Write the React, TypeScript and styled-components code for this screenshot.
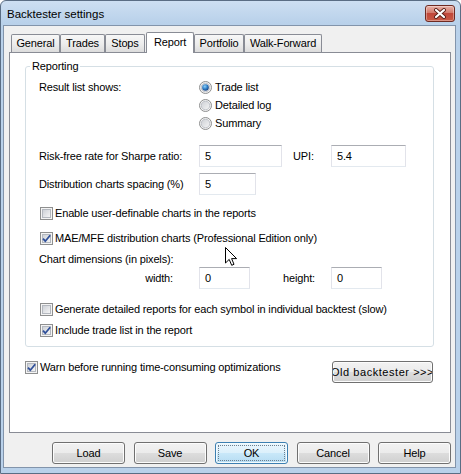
import React, { useId } from 'react';
import styled, { createGlobalStyle, css } from 'styled-components';

const GlobalStyle = createGlobalStyle`
  *, *::before, *::after { box-sizing: border-box; }
  html, body { margin: 0; padding: 0; background: #fff; }
  body {
    font-family: "Liberation Sans", Arial, sans-serif;
    font-size: 11px;
    letter-spacing: -0.15px;
    color: #000;
  }
`;

const Frame = styled.div`
  position: relative;
  width: 461px;
  height: 474px;
  display: flex;
  flex-direction: column;
  padding: 0 4px 5px 2px;
  border: 1px solid #5a6d84;
  border-radius: 6px 6px 0 0;
  background: linear-gradient(to bottom, #cddff2 0px, #b9d1ea 22px, #b9d1ea 100%);
  overflow: hidden;
`;

const TitleBar = styled.div`
  height: 24px;
  display: flex;
  justify-content: space-between;
  align-items: flex-start;
`;

const Title = styled.div`
  padding: 5px 0 0 4px;
  line-height: 16px;
  font-size: 11.5px;
  letter-spacing: 0;
`;

const CloseButton = styled.div`
  width: 30px;
  height: 17px;
  margin: 4px 1px 0 0;
  border: 1px solid #6e2a22;
  border-radius: 3px;
  display: flex;
  align-items: center;
  justify-content: center;
  background: linear-gradient(to bottom, #e8b2a8 0%, #d27a6c 45%, #c0473a 50%, #c85a45 100%);
  box-shadow: inset 0 0 0 1px rgba(255, 255, 255, 0.35);
`;

const Client = styled.div`
  flex: 1;
  display: flex;
  flex-direction: column;
  padding: 6px 4px 3px 5px;
  background: #f0f0f0;
  border: 1px solid #8294ab;
`;

const TabStrip = styled.div`
  height: 20px;
  display: flex;
  align-items: flex-end;
  padding-left: 2px;
`;

const Tab = styled.div<{ $width: number; $active?: boolean }>`
  width: ${(p) => p.$width}px;
  height: 18px;
  line-height: 17px;
  text-align: center;
  border: 1px solid #898c95;
  border-bottom: none;
  border-radius: 2px 2px 0 0;
  background: linear-gradient(to bottom, #f7f7f7 0%, #ececec 55%, #dcdcdc 100%);
  ${(p) =>
    p.$active &&
    css`
      position: relative;
      z-index: 1;
      height: 21px;
      line-height: 18px;
      padding-bottom: 2px;
      margin: 0 0 -1px 1px;
      background: #fff;
    `}
`;

const Panel = styled.div`
  height: 381px;
  display: flex;
  flex-direction: column;
  padding: 0 16px 0 15px;
  background: #fff;
  border: 1px solid #898c95;
`;

const Group = styled.fieldset`
  margin: 6px 0 0;
  padding: 0;
  min-width: 0;
  border: 1px solid #d5dfe5;
  border-radius: 3px;
`;

const Legend = styled.legend`
  margin-left: 4px;
  padding: 0 2px;
  line-height: 14px;
`;

const GroupBody = styled.div`
  display: flex;
  flex-direction: column;
  padding: 5px 0 8px 13px;
`;

const Row = styled.div<{ $gap?: number }>`
  display: flex;
  align-items: center;
  margin-top: ${(p) => p.$gap ?? 0}px;
`;

const TopRow = styled(Row)`
  align-items: flex-start;
`;

const FieldLabel = styled.div<{ $width?: number; $right?: number }>`
  width: ${(p) => p.$width ?? 160}px;
  flex-shrink: 0;
  line-height: 18px;
  ${(p) =>
    p.$right !== undefined &&
    css`
      text-align: right;
      padding-right: ${p.$right}px;
    `}
`;

const RadioList = styled.div`
  display: flex;
  flex-direction: column;
`;

const OptionLine = styled.label`
  height: 18px;
  display: flex;
  align-items: center;
  gap: 3px;
`;

const CheckLine = styled.label<{ $gap?: number }>`
  height: 16px;
  display: flex;
  align-items: center;
  gap: 2px;
  margin: ${(p) => p.$gap ?? 0}px 0 0 1px;
`;

const TextBox = styled.div<{ $width: number }>`
  width: ${(p) => p.$width}px;
  height: 22px;
  flex-shrink: 0;
  padding-left: 5px;
  line-height: 20px;
  background: #fff;
  border: 1px solid #e2e3ea;
  border-top-color: #abadb3;
  border-bottom-color: #e3e9ef;
`;

const SideLabel = styled.div`
  width: 38px;
  margin-left: 11px;
  line-height: 18px;
`;

const WarnRow = styled.div`
  display: flex;
  justify-content: space-between;
  align-items: flex-start;
  margin: 12px 1px 0 -1px;
`;

const buttonLook = css`
  height: 22px;
  display: flex;
  align-items: center;
  justify-content: center;
  border: 1px solid #707070;
  border-radius: 3px;
  background: linear-gradient(to bottom, #f2f2f2 0%, #ebebeb 50%, #dddddd 50%, #cfcfcf 100%);
  box-shadow: inset 0 0 0 1px #fcfcfc;
  white-space: nowrap;
  overflow: hidden;
`;

const OldButton = styled.div`
  ${buttonLook}
  width: 101px;
  margin-top: 2px;
  letter-spacing: 0.55px;

  span {
    flex-shrink: 0;
  }
`;

const ButtonRow = styled.div`
  display: flex;
  justify-content: flex-end;
  gap: 8.5px;
  margin-top: 9px;
`;

const DialogButton = styled.div<{ $default?: boolean }>`
  ${buttonLook}
  width: 73px;
  ${(p) =>
    p.$default &&
    css`
      border-color: #3c7fb1;
      background: linear-gradient(to bottom, #eaf6fd 0%, #dcf0fb 50%, #c9e8f9 50%, #b6dcf2 100%);
      box-shadow: inset 0 0 0 1px #f4fbfe;
      outline: 1px dotted #6d7f8f;
      outline-offset: -4px;
    `}
`;

const Pointer = styled.svg`
  position: absolute;
  left: 224px;
  top: 246px;
`;

function CheckBox({ checked }: { checked?: boolean }) {
  const id = useId();
  return (
    <svg width="13" height="13" viewBox="0 0 13 13">
      <defs>
        <linearGradient id={id} x1="0" y1="0" x2="1" y2="1">
          <stop offset="0" stopColor="#cbcfd5" />
          <stop offset="1" stopColor="#f7f7f7" />
        </linearGradient>
      </defs>
      <rect x="0.5" y="0.5" width="12" height="12" fill="#f4f4f4" stroke="#8e8f8f" />
      <rect x="2.5" y="2.5" width="8" height="8" fill={`url(#${id})`} stroke="#b4b8bf" />
      {checked && (
        <path d="M3 6.6 L5.3 9.2 L10.2 3.2" fill="none" stroke="#30509a" strokeWidth="1.8" />
      )}
    </svg>
  );
}

function Radio({ checked }: { checked?: boolean }) {
  const id = useId();
  return (
    <svg width="13" height="13" viewBox="0 0 13 13">
      <defs>
        <linearGradient id={`${id}a`} x1="0" y1="0" x2="1" y2="1">
          <stop offset="0" stopColor="#cdd0d5" />
          <stop offset="1" stopColor="#f6f6f6" />
        </linearGradient>
        <radialGradient id={`${id}b`} cx="0.4" cy="0.35" r="0.7">
          <stop offset="0" stopColor="#8fd0f8" />
          <stop offset="0.55" stopColor="#2f7ec6" />
          <stop offset="1" stopColor="#1a3d78" />
        </radialGradient>
      </defs>
      <circle cx="6.5" cy="6.5" r="6" fill="#f4f4f4" stroke="#8e8f8f" />
      <circle cx="6.5" cy="6.5" r="4.3" fill={`url(#${id}a)`} stroke="#b4b8bf" strokeWidth="0.8" />
      {checked && <circle cx="6.5" cy="6.5" r="3.3" fill={`url(#${id}b)`} />}
    </svg>
  );
}

const tabs = [
  { label: 'General', width: 49 },
  { label: 'Trades', width: 45 },
  { label: 'Stops', width: 40 },
  { label: 'Report', width: 48, active: true },
  { label: 'Portfolio', width: 50 },
  { label: 'Walk-Forward', width: 78 },
];

const App = () => {
  return (
    <>
      <GlobalStyle />
      <Frame>
        <TitleBar>
          <Title>Backtester settings</Title>
          <CloseButton>
            <svg width="14" height="11" viewBox="0 0 14 11">
              <path d="M3 2 L11 9 M11 2 L3 9" stroke="#5b2119" strokeWidth="4" strokeLinecap="round" />
              <path d="M3 2 L11 9 M11 2 L3 9" stroke="#ffffff" strokeWidth="2.2" strokeLinecap="round" />
            </svg>
          </CloseButton>
        </TitleBar>
        <Client>
          <TabStrip>
            {tabs.map((t) => (
              <Tab key={t.label} $width={t.width} $active={t.active}>
                {t.label}
              </Tab>
            ))}
          </TabStrip>
          <Panel>
            <Group>
              <Legend>Reporting</Legend>
              <GroupBody>
                <TopRow>
                  <FieldLabel>Result list shows:</FieldLabel>
                  <RadioList>
                    <OptionLine>
                      <Radio checked />
                      Trade list
                    </OptionLine>
                    <OptionLine>
                      <Radio />
                      Detailed log
                    </OptionLine>
                    <OptionLine>
                      <Radio />
                      Summary
                    </OptionLine>
                  </RadioList>
                </TopRow>
                <Row $gap={13}>
                  <FieldLabel>Risk-free rate for Sharpe ratio:</FieldLabel>
                  <TextBox $width={83}>5</TextBox>
                  <SideLabel>UPI:</SideLabel>
                  <TextBox $width={75}>5.4</TextBox>
                </Row>
                <Row $gap={6}>
                  <FieldLabel>Distribution charts spacing (%)</FieldLabel>
                  <TextBox $width={57}>5</TextBox>
                </Row>
                <CheckLine $gap={10}>
                  <CheckBox />
                  Enable user-definable charts in the reports
                </CheckLine>
                <CheckLine $gap={9}>
                  <CheckBox checked />
                  MAE/MFE distribution charts (Professional Edition only)
                </CheckLine>
                <Row $gap={4}>
                  <FieldLabel>Chart dimensions (in pixels):</FieldLabel>
                </Row>
                <Row $gap={-1}>
                  <FieldLabel $right={26}>width:</FieldLabel>
                  <TextBox $width={51}>0</TextBox>
                  <FieldLabel $width={81} $right={16}>
                    height:
                  </FieldLabel>
                  <TextBox $width={51}>0</TextBox>
                </Row>
                <CheckLine $gap={12}>
                  <CheckBox />
                  Generate detailed reports for each symbol in individual backtest (slow)
                </CheckLine>
                <CheckLine $gap={5}>
                  <CheckBox checked />
                  Include trade list in the report
                </CheckLine>
              </GroupBody>
            </Group>
            <WarnRow>
              <CheckLine>
                <CheckBox checked />
                Warn before running time-consuming optimizations
              </CheckLine>
              <OldButton>
                <span>Old backtester &gt;&gt;&gt;</span>
              </OldButton>
            </WarnRow>
          </Panel>
          <ButtonRow>
            <DialogButton>Load</DialogButton>
            <DialogButton>Save</DialogButton>
            <DialogButton $default>OK</DialogButton>
            <DialogButton>Cancel</DialogButton>
            <DialogButton>Help</DialogButton>
          </ButtonRow>
        </Client>
        <Pointer width="13" height="20" viewBox="0 0 13 20">
          <path
            d="M0.5 0.5 L0.5 16 L4.2 12.4 L6.7 18.3 L9 17.3 L6.6 11.6 L11.6 11.6 Z"
            fill="#fff"
            stroke="#000"
            strokeWidth="1"
            strokeLinejoin="round"
          />
        </Pointer>
      </Frame>
    </>
  );
};

export default App;
